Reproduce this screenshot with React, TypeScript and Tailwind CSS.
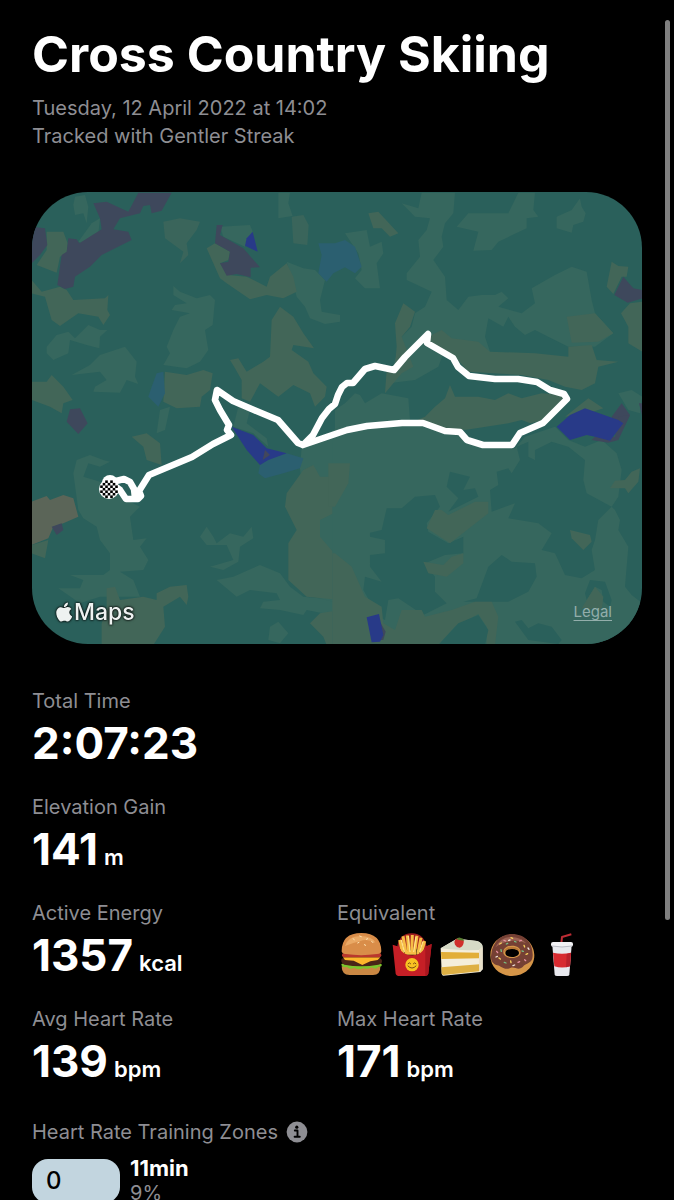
import type { ReactNode } from "react";

// Land cover, split in four quarters that share one scale (3 units = 1 map unit)
const quarters = [
  {
    transform: "translate(-12 -12) scale(.33333)",
    areas: [
      { fill: "#36675e", shapes: [
        "165,50 195,45 205,80 200,130 190,100 165,105 160,75",
        "240,115 215,130 175,185 190,192 235,160",
        "775,38 810,38 805,70 818,108 775,115",
        "600,140 690,135 700,160 675,200 610,170",
        "460,318 480,335 530,355 570,345 585,360 578,435 555,450 565,510 540,545 500,565 430,555 450,520 440,500 460,450 480,410 510,400 455,390 465,375 500,370 460,345",
        "80,500 110,465 145,455 165,475 205,435 240,450 262,450 240,470 238,505 200,495 150,480 145,520 100,540 80,520",
        "155,585 210,555 240,525 315,500 350,545 345,590 355,612 320,600 300,638 220,635 225,620 260,600 240,575",
        "800,245 850,265 885,270 915,300 900,360 905,395 960,405 960,425 915,432 870,415 855,380 830,350 820,310",
        "420,690 450,680 435,750 410,760",
      ] },
      { fill: "#3a655b", shapes: [
        "430,125 480,115 540,125 530,150 500,190 505,225 480,250 490,215 435,175",
        "815,110 850,105 866,135 862,195 820,190",
      ] },
      { fill: "#426658", shapes: [
        "80,155 130,155 143,190 140,220 120,230 110,278 50,255 80,210",
        "35,300 65,335 120,320 140,330 160,360 255,355 265,345 262,390 270,405 250,435 235,410 175,400 120,438 95,420 75,350 35,340",
        "560,205 585,190 630,215 625,240 600,250 625,285 680,290 740,320 750,290 800,250 820,290 830,335 790,355 740,345 690,358 620,310 600,295",
        "35,605 80,605 95,585 130,620 158,660 130,670 125,700 90,680 35,660",
        "435,575 500,585 550,570 578,580 570,630 545,650 540,680 470,685 430,665",
        "630,540 655,535 680,575 730,545 750,530 755,420 780,380 820,410 850,460 882,505 820,495 815,510 865,545 880,580 920,620 915,650 885,680 870,640 820,615 775,650 720,610 690,665 665,655 665,600 645,565",
      ] },
      { fill: "#3e485c", shapes: [
        "35,140 75,145 82,195 60,225 35,250",
        "220,70 260,65 325,95 355,38 455,38 425,92 395,100 390,75 370,78 360,100 300,115 280,148 325,155 335,180 245,225 210,260 165,290 160,320 135,327 112,315 125,225 140,215 145,175 170,178 178,190 245,148 240,115",
        "590,135 608,135 600,165 670,205 720,262 692,263 692,292 650,282 620,287 600,250 625,245 630,215 585,190",
        "150,688 180,685 203,730 175,762 140,725",
      ] },
      { fill: "#2b5f70", shapes: ["410,580 430,575 435,640 415,680 385,650 395,620"] },
      { fill: "#283a88", shapes: ["698,155 713,215 675,197 680,175"] },
    ],
  },
  {
    transform: "translate(303 -12) scale(.33333)",
    areas: [
      { fill: "#36675e", shapes: [
        "200,70 250,85 260,38 360,38 355,100 330,130 320,170 325,200 295,240 330,290 335,360 370,390 400,350 440,345 480,345 500,335 520,355 490,380 560,400 600,370 590,325 660,285 710,260 755,275 770,360 780,400 835,460 780,500 700,500 640,470 600,450 570,465 540,440 520,410 505,440 460,415 450,470 465,515 410,500 340,480 310,560 240,600 160,610 200,470 230,440 240,400 270,380 290,335 215,300 215,280 255,230 250,180 275,150 285,115 240,110",
        "365,140 400,100 520,100 550,38 600,38 595,90 610,110 575,115 575,145 490,185 470,210 415,212 430,155",
        "665,110 710,90 735,55 740,80 752,100 745,125 715,135 710,158 665,145",
        "30,160 95,150 105,200 140,185 145,220 125,250 135,325 90,325 60,295 80,270 70,220",
        "0,690 30,670 60,640 75,645 90,670 140,640 220,655 225,720 0,760",
        "850,640 890,630 922,650 915,700 880,690",
      ] },
      { fill: "#426658", shapes: [
        "205,370 240,395 225,440 200,470 235,560 200,580 150,640 155,570 180,555 185,500 180,430",
        "100,100 130,95 190,160 165,170 140,145 115,145",
        "320,450 350,475 430,485 465,515 600,520 700,530 700,500 770,495 785,540 850,545 790,560 780,610 740,630 690,620 640,600 560,585 400,575 360,530 280,490 290,465",
        "695,410 780,400 835,460 790,485 710,488",
        "830,245 850,258 880,260 875,290 860,290 835,342 815,320",
        "922,365 885,370 858,400 880,440 880,490 922,515",
        "200,740 270,710 300,680 330,655 345,615 360,650 430,650 480,660 520,640 560,655 620,640 690,645 690,660 630,720 540,740 500,765 400,750",
        "690,710 760,655 805,685 760,700",
      ] },
      { fill: "#3e485c", shapes: [
        "865,290 895,325 922,330 922,355 878,368 838,345",
        "830,710 860,670 885,705 850,775",
      ] },
      { fill: "#2b5f70", shapes: ["-50,190 0,190 30,180 60,200 80,260 60,280 30,262 -5,280 -25,305 -50,280 -40,225"] },
    ],
  },
  {
    transform: "translate(-12 218) scale(.33333)",
    areas: [
      { fill: "#36675e", shapes: [
        "170,150 210,135 250,150 270,155 240,170 205,160 190,200 240,215 300,260 360,290 330,320 340,390 380,385 360,410 385,450 370,480 300,485 340,510 360,560 240,560 180,580 115,535 180,535 190,510 150,495 250,495 270,480 270,430 240,390 230,350 190,325 175,300 160,190",
        "540,380 560,350 580,380 590,400 630,370 670,380 695,350 700,385 660,410 655,455 610,480 570,470 640,450 620,405 560,405",
        "590,510 640,500 720,465 780,490 810,530 850,560 960,570 960,620 860,600 850,615 780,600 720,595 730,575 780,570 770,550 690,540 650,560",
        "750,650 775,635 805,670 780,700 745,690",
        "845,110 960,50 960,580 880,560 840,175",
        "655,-10 690,0 680,40 740,85 745,110 700,70 640,50",
      ] },
      { fill: "#426658", shapes: [
        "335,80 380,70 420,100 425,165 380,150 370,110",
        "850,180 880,165 900,200 960,200 960,300 900,330 900,380 960,450 960,570 860,560 805,510 805,400 830,360 795,290 800,250",
        "260,535 285,530 300,570 370,560 410,570 410,550 450,530 500,525 505,560 500,585 480,560 430,590 435,650 400,705 245,705 245,640 260,600",
        "870,640 900,610 960,600 960,705 920,705 910,680",
        "35,405 85,390 75,445 35,430",
      ] },
      { fill: "#5b6558", shapes: ["35,275 80,258 90,270 130,255 160,265 175,320 130,340 100,350 85,385 35,405"] },
      { fill: "#3e485c", shapes: ["95,350 125,340 130,360 110,375"] },
      { fill: "#2b5f70", shapes: ["720,165 750,145 800,130 850,145 840,175 790,190 735,205 715,190"] },
      { fill: "#283a88", shapes: ["635,50 700,75 740,115 800,130 745,150 720,165 680,120"] },
      { fill: "#42475c", shapes: ["735,120 750,135 728,150"] },
    ],
  },
  {
    transform: "translate(303 218) scale(.33333)",
    areas: [
      { fill: "#36675e", shapes: [
        "-8,75 110,40 260,40 380,70 390,100 540,115 570,80 660,50 700,90 750,110 800,90 845,130 860,180 850,260 830,290 840,300 855,330 850,360 880,410 870,530 890,555 922,580 922,705 -8,705",
      ] },
      { fill: "#2a605b", shapes: [
        "650,95 700,110 750,150 745,210 755,250 830,290 790,330 780,390 770,420 780,480 740,505 690,495 660,430 620,420 650,370 610,340 520,325 540,280 470,305 465,240 490,225 485,185 520,175 530,190 555,150 545,110 580,95 580,140 600,150 600,120",
        "155,295 200,295 240,260 300,255 315,290 275,340 280,365 340,400 385,380 385,430 330,435 270,460 300,500 300,545 335,580 265,615 190,565 160,570 150,630 130,620 85,540 90,500 140,515 105,470 105,435 150,430 150,390 105,380 105,368 140,360",
        "345,185 405,200 385,240 420,235 430,260 340,305 370,265 335,230",
        "385,575 425,565 460,470 500,435 530,455 600,460 605,500 580,545 520,575",
        "540,635 560,630 580,655 610,640 650,650 680,690 670,702 580,690",
        "765,510 810,515 830,570 825,590 805,575 800,540 780,530 755,570 750,550",
        "390,60 520,40 560,30 600,45 540,80 520,95 440,90",
      ] },
      { fill: "#426658", shapes: [
        "275,355 300,300 320,300 340,315 420,275 460,275 460,310 345,400",
        "265,455 325,465 350,440 385,430 385,460 335,500 280,490",
        "705,360 765,375 770,395 745,420 710,385",
        "780,530 805,560 800,600 740,595",
        "825,235 840,212 870,210 890,185 915,175 910,215 880,250 870,235",
        "-8,430 0,430 50,470 90,560 140,590 145,640 180,660 200,600 260,600 270,620 350,600 420,575 470,575 490,620 480,705 455,705 455,650 430,612 360,650 310,705 -8,705",
        "-20,160 45,160 40,220 0,290 -20,290",
      ] },
      { fill: "#2a605b", shapes: ["310,705 370,640 430,615 460,660 450,705"] },
      { fill: "#3e485c", shapes: [
        "850,20 885,15 850,90 820,98 770,90 780,80 840,80",
        "912,-20 922,-20 922,20",
        "135,635 152,665 145,690 130,690",
      ] },
      { fill: "#283a88", shapes: [
        "665,50 705,15 750,-5 850,30 865,40 825,92 780,80 755,75 705,90",
        "95,622 132,612 145,675 135,695 110,697",
      ] },
    ],
  },
];

const route =
  "M78 291L84 289L92 287L98 290L102 297L103 306M84 295L88 298L94 307L106 307L109 304L107 299L117 283L160 265L181 252L199 243L195 238L197 233L188 218L183 208L185 198L201 209L222 218L246 228L266 251L271 253L281 243L290 226L297 217L303 212L306 203L310 195L315 191L321 191L333 177L343 174L362 178L373 165L396 142L395 151L421 166L426 175L437 184L463 187L486 187L505 190L518 198L532 202L535 207L511 231L488 241L480 253L451 253L435 248L428 240L413 239L391 231L370 231L335 234L315 238L271 253";

// Dark cells of the finish flag, as steps from its centre
const flagCells = [
  [-1, -3], [1, -3], [-2, -2], [0, -2], [2, -2], [-3, -1], [-1, -1], [1, -1], [3, -1],
  [-2, 0], [0, 0], [2, 0], [-3, 1], [-1, 1], [1, 1], [3, 1], [-2, 2], [0, 2], [2, 2], [-1, 3], [1, 3],
];

const AppleLogo = () => (
  <svg viewBox="0 0 384 480" className="w-4 h-5" fill="currentColor" aria-hidden="true">
    <path d="M319 252c0-37 17-64 50-85-19-27-47-42-84-45-35-3-74 21-88 21-15 0-49-20-76-20C66 124 6 168 6 257q0 40 15 82c13 37 60 129 109 127 26-1 44-18 77-18 32 0 49 18 77 18 50-1 93-84 106-121-67-32-71-93-71-93zM262 88c28-33 25-64 24-75-24 1-53 17-69 35-18 20-29 46-26 74 26 2 50-11 71-34z" />
  </svg>
);

const RouteMap = () => (
  <div className="relative overflow-hidden rounded-[56px] mt-[42px]">
    <svg viewBox="0 0 610 452" className="block w-full" role="img" aria-label="Workout route">
      <rect width="610" height="452" fill="#2a605b" />
      {quarters.map((quarter) => (
        <g key={quarter.transform} transform={quarter.transform}>
          {quarter.areas.map((area) =>
            area.shapes.map((points) => <polygon key={points} points={points} fill={area.fill} />)
          )}
        </g>
      ))}
      <path d={route} fill="none" stroke="#fff" strokeWidth="6.6" strokeLinejoin="round" strokeLinecap="round" />
      <circle cx="78" cy="291" r="8" fill="#fff" />
      <circle cx="77" cy="297" r="10" fill="#fff" />
      {flagCells.map(([x, y]) => (
        <rect key={`${x},${y}`} x={75.7 + x * 2.5} y={295.9 + y * 2.5} width="2.6" height="2.6" fill="#000" />
      ))}
    </svg>
    <div className="absolute left-6 bottom-4 flex items-center gap-0.5 text-[#eef2f1] [filter:drop-shadow(0_0_1px_#000)_drop-shadow(0_0_1px_#0008)]">
      <AppleLogo />
      <span className="text-[23px] leading-8 font-medium">Maps</span>
    </div>
    <a href="#legal" className="absolute right-[30px] bottom-5 text-[15px] leading-6 text-[#93aeab] underline underline-offset-3">
      Legal
    </a>
  </div>
);

const Burger = () => (
  <svg viewBox="0 0 150 138" className="w-full" role="img" aria-label="Burger">
    <path d="M14 103Q14 129 38 129H108Q131 129 130 103Z" fill="#c98743" />
    <path d="M13 96Q20 92 73 96Q128 92 134 97Q136 106 124 104Q116 114 104 106Q92 114 80 108Q64 116 52 107Q38 114 30 105Q14 109 13 96Z" fill="#7cc52c" />
    <path d="M13 84Q13 78 22 78H126Q135 80 135 88Q134 98 124 98Q72 108 22 98Q12 94 13 84Z" fill="#4a2417" />
    <path d="M18 76H130L122 84L100 88L76 99L50 86L24 84Z" fill="#fdb62b" />
    <rect x="15" y="63" width="118" height="13" rx="6" fill="#b9382d" />
    <path d="M14 58Q14 3 73 3Q133 4 133 58Q132 66 120 66Q72 73 26 66Q14 65 14 58Z" fill="#d98d49" />
    <path d="M24 42Q32 14 70 12Q105 12 115 32Q90 18 68 28Q44 34 24 42Z" fill="#eaa965" />
    <path d="M48 20l4 3M68 12l5 2M88 22l4-2M104 28l4 4M62 33l4-2M82 38l4 2" stroke="#ffe4b3" strokeWidth="3" strokeLinecap="round" />
  </svg>
);

const Fries = () => (
  <svg viewBox="0 0 150 138" className="w-full" role="img" aria-label="Fries">
    <path d="M30 50Q34 5 74 4Q114 5 120 50Z" fill="#9e1c20" />
    <path d="M38 24L48 68M48 13L58 68M61 10L66 68M76 9L74 68M90 11L82 68M102 17L92 68M113 27L102 66" stroke="#f6bd45" strokeWidth="9" />
    <path d="M43 24L52 60M64 12L69 60M87 14L80 60M108 28L98 60" stroke="#ffe386" strokeWidth="4" />
    <path d="M17 38L36 44Q46 70 76 70Q106 68 115 44L134 36L124 125Q122 132 112 132H38Q28 132 26 125Z" fill="#c51f26" />
    <path d="M115 44L134 36L124 125Q123 131 115 132Z" fill="#a9161f" />
    <circle cx="75" cy="98" r="20" fill="#f9c322" />
    <path d="M63 95q4-6 8 0M79 95q4-6 8 0M63 102q12 13 24 0" fill="none" stroke="#7a4b13" strokeWidth="3" strokeLinecap="round" />
  </svg>
);

const Cake = () => (
  <svg viewBox="0 0 150 138" className="w-full" role="img" aria-label="Cake">
    <path d="M11 49L60 20L120 27Q136 32 137 46V112L130 120L19 131Q14 131 14 124Z" fill="#f4eedb" />
    <path d="M11 49L60 20L120 27Q137 33 137 44L126 54Q60 56 11 49Z" fill="#d6dac6" />
    <path d="M12 60L126 62V79L13 81Z" fill="#e2ae38" />
    <path d="M13 106L127 97V118L19 129Q15 129 14 124Z" fill="#deb044" />
    <path d="M126 54L137 45V112L127 119Z" fill="#e9e1ca" />
    <path d="M53 26Q56 17 69 20Q83 21 80 32Q78 44 68 47Q58 46 54 38Q51 31 53 26Z" fill="#d02f2b" />
    <path d="M58 22Q64 14 72 18Q80 18 82 26L70 25Z" fill="#587c30" />
  </svg>
);

const Donut = () => (
  <svg viewBox="0 0 150 138" className="w-full" role="img" aria-label="Donut">
    <path fillRule="evenodd" d="M75 8C112 8 142 34 142 70C142 106 112 132 75 132C38 132 10 106 10 70C10 34 38 8 75 8ZM75 50C63 50 55 55 55 63C55 70 63 75 75 75C87 75 96 70 96 63C96 55 87 50 75 50Z" fill="#d59548" />
    <path fillRule="evenodd" d="M75 6C114 6 139 34 137 72C136 96 117 92 107 105C93 117 84 103 70 108C51 116 44 103 31 100C13 94 10 82 13 66C17 30 42 6 75 6ZM75 41C60 41 49 49 49 60C49 71 60 78 75 78C91 78 101 71 101 60C101 49 91 41 75 41Z" fill="#754034" />
    <path d="M25 46Q42 15 72 15Q102 16 118 34Q86 20 66 29Q43 31 25 46Z" fill="#9c6254" />
    <path d="M50 62Q54 44 75 45Q96 45 100 61Q93 51 75 51Q57 51 50 62Z" fill="#b77636" />
    <g strokeWidth="4" strokeLinecap="round">
      <path d="M38 36l5-3M72 17l5 2M111 40l2 5M122 65l-5 2M71 87l1 5M36 78l4 3" stroke="#f7d25e" />
      <path d="M51 25l5 2M98 27l5-2M29 58l3 4M93 91l5-2M113 83l3 3" stroke="#e891a1" />
      <path d="M87 30l-4-2M58 36l4-2M42 53l1 5M105 57l4 1M52 91l5 2" stroke="#78bd83" />
      <path d="M123 48l3 4M31 73l-4 2M78 101l5-2M65 25l4-1" stroke="#f0e5dc" />
    </g>
  </svg>
);

const Soda = () => (
  <svg viewBox="0 0 150 138" className="w-full" role="img" aria-label="Soft drink">
    <path d="M73 34L75 15L103 7" fill="none" stroke="#bd2c34" strokeWidth="6" strokeLinejoin="round" />
    <path d="M46 40H104L97 128Q96 132 90 132H60Q54 132 53 128Z" fill="#e7e8ed" />
    <path d="M48 62Q75 68 102 62L99 103Q75 110 52 103Z" fill="#d72a30" />
    <path d="M89 66L102 62L99 103L87 106Z" fill="#b8202a" />
    <rect x="42" y="30" width="66" height="14" rx="6" fill="#f1f1f4" />
    <path d="M45 42Q75 48 105 42" fill="none" stroke="#b9bbc4" strokeWidth="3" />
  </svg>
);

const InfoIcon = () => (
  <svg viewBox="0 0 22 22" className="w-[22px] h-[22px]" aria-hidden="true">
    <circle cx="11" cy="11" r="10.4" fill="#8e8e93" />
    <circle cx="10.8" cy="6.2" r="1.6" fill="#000" />
    <path d="M8.8 9.5H11.5V15.6M8.6 15.8H13.8" fill="none" stroke="#000" strokeWidth="1.9" strokeLinecap="round" strokeLinejoin="round" />
  </svg>
);

type StatProps = { label: string; value?: string; unit?: string; children?: ReactNode };

const Stat = ({ label, value, unit, children }: StatProps) => (
  <div>
    <dt className="text-xl leading-7 text-[#8e8e93]">{label}</dt>
    <dd className="flex items-baseline gap-1.5 h-[52px] text-[44px] leading-[56px] font-bold">
      {children ?? (
        <>
          <span>{value}</span>
          {unit && <span className="text-[22px] font-semibold">{unit}</span>}
        </>
      )}
    </dd>
  </div>
);

export default function App() {
  return (
    <div className="relative h-screen overflow-hidden bg-black text-white font-[Inter,sans-serif]">
      <main className="h-full overflow-y-auto [scrollbar-width:none] px-8 pt-[26px] pb-8">
        <header>
          <h1 className="text-[50px] leading-[56px] font-bold">Cross Country Skiing</h1>
          <p className="mt-3 text-xl leading-7 text-[#8e8e93]">
            Tuesday, 12 April 2022 at 14:02
            <br />
            Tracked with Gentler Streak
          </p>
        </header>

        <RouteMap />

        {/* Workout totals */}
        <dl className="grid grid-cols-2 gap-y-[26px] mt-[43px]">
          <div className="col-span-2">
            <Stat label="Total Time" value="2:07:23" />
          </div>
          <div className="col-span-2">
            <Stat label="Elevation Gain" value="141" unit="m" />
          </div>
          <Stat label="Active Energy" value="1357" unit="kcal" />
          <Stat label="Equivalent">
            <div className="grid grid-cols-5 w-[250px] pt-[5px]">
              <Burger />
              <Fries />
              <Cake />
              <Donut />
              <Soda />
            </div>
          </Stat>
          <Stat label="Avg Heart Rate" value="139" unit="bpm" />
          <Stat label="Max Heart Rate" value="171" unit="bpm" />
        </dl>

        {/* Training zones */}
        <section className="mt-[33px]">
          <div className="flex items-center gap-2 text-[#8e8e93]">
            <h2 className="text-xl leading-7">Heart Rate Training Zones</h2>
            <button type="button" aria-label="About training zones">
              <InfoIcon />
            </button>
          </div>
          <div className="flex items-center gap-2.5 mt-2.5">
            <div className="flex items-center w-[88px] h-11 pl-3.5 rounded-2xl bg-[#c2d5df] text-black text-2xl font-medium">
              0
            </div>
            <div className="text-xl leading-[25px]">
              <p className="text-[22px] font-bold">11min</p>
              <p className="text-[#8e8e93]">9%</p>
            </div>
          </div>
        </section>
      </main>

      {/* Scroll position */}
      <div className="absolute right-1 top-5 w-[5px] h-3/4 rounded-full bg-[#7f7f7f]" />
    </div>
  );
}
